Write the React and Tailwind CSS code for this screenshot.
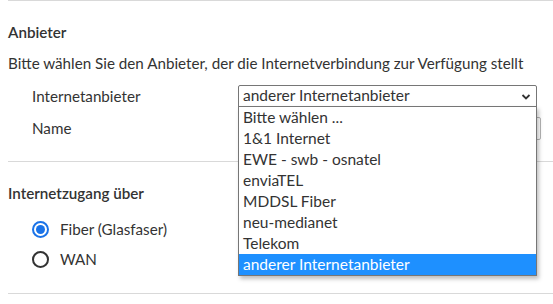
import React from 'react'

const providers = [
  'Bitte wählen ...',
  '1&1 Internet',
  'EWE - swb - osnatel',
  'enviaTEL',
  'MDDSL Fiber',
  'neu-medianet',
  'Telekom',
  'anderer Internetanbieter',
]

const Radio = ({ checked, label }) => (
  <label className="flex items-center h-[30px] pl-6">
    {checked ? (
      <span className="w-[17px] h-[17px] rounded-full border-2 border-[#1a73e8] flex items-center justify-center">
        <span className="w-[9px] h-[9px] rounded-full bg-[#1a73e8]" />
      </span>
    ) : (
      <span className="w-[17px] h-[17px] rounded-full border-2 border-[#333]" />
    )}
    <span className="ml-[11px]">{label}</span>
  </label>
)

const App = () => {
  return (
    <div className="w-[553px] h-[304px] overflow-hidden bg-white pl-2 text-[15.2px] text-[#333] font-['Lato',sans-serif]">
      <div className="border-t border-[#d9d9d9]" />

      {/* Anbieter */}
      <div className="relative pt-[19px] pb-[21px] border-b border-[#d9d9d9]">
        <h3 className="font-semibold leading-6">Anbieter</h3>
        <p className="mt-[7px] leading-6">
          Bitte wählen Sie den Anbieter, der die Internetverbindung zur Verfügung stellt
        </p>

        <div className="mt-[9px] grid grid-cols-[206px_1fr] gap-y-[9px] pl-6 items-center">
          <span className="leading-6">Internetanbieter</span>
          <div className="relative w-[299px] h-[23px] border border-[#767676] rounded-[2px] bg-white flex items-center px-1 text-[15.5px]">
            anderer Internetanbieter
            <svg className="absolute right-[5px] top-[7px]" width="10" height="8" viewBox="0 0 10 8">
              <path d="M1.5 2 L5 5.5 L8.5 2" fill="none" stroke="#333" strokeWidth="1.8" />
            </svg>
          </div>
          <span className="leading-6 -mt-px">Name</span>
          <div className="w-[303px] h-[23px] border border-[#b5b5b5] rounded-[2px] bg-white" />
        </div>

        {/* open list */}
        <ul className="absolute left-[230px] top-[105px] w-[299px] bg-white border border-[#767676] shadow-[2px_3px_4px_rgba(0,0,0,0.25)] text-[15.5px] z-10">
          {providers.map((p, i) => (
            <li
              key={p}
              className={`h-[21px] leading-[21px] px-1 ${i === providers.length - 1 ? 'bg-[#1e90ff] text-white' : ''}`}
            >
              {p}
            </li>
          ))}
        </ul>
      </div>

      {/* Internetzugang */}
      <div className="pt-[19px] pb-[19px] border-b border-[#d9d9d9]">
        <h3 className="font-semibold leading-6">Internetzugang über</h3>
        <div className="mt-[9px]">
          <Radio checked label="Fiber (Glasfaser)" />
          <Radio label="WAN" />
        </div>
      </div>
    </div>
  )
}

export default App
